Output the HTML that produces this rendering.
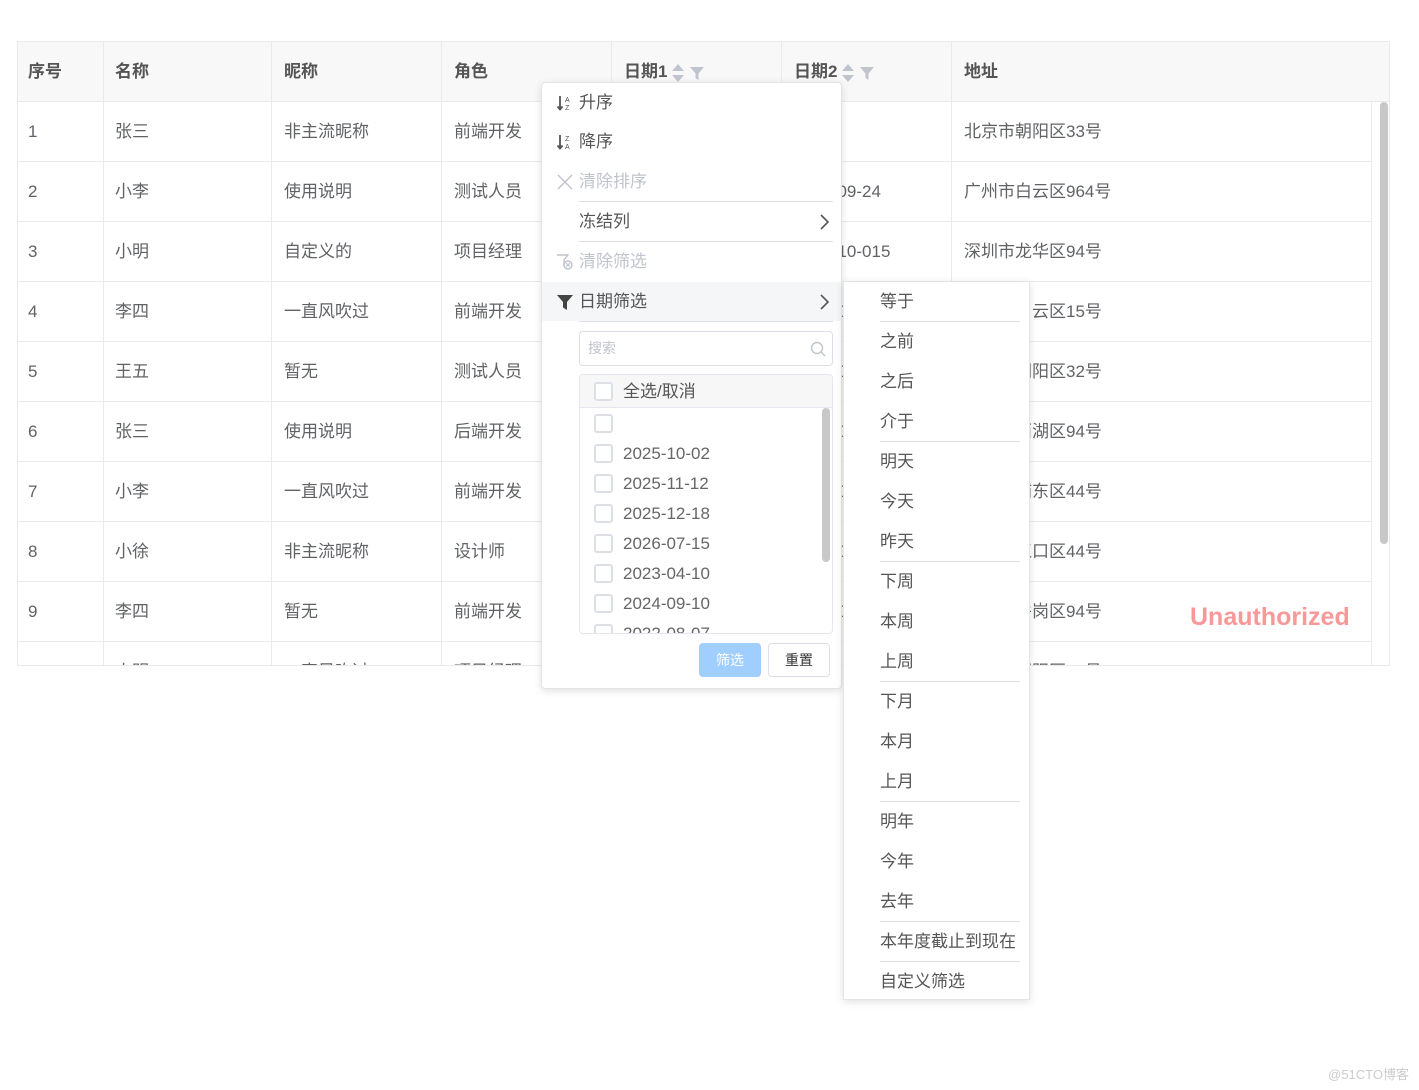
<!DOCTYPE html>
<html><head><meta charset="utf-8"><style>
*{box-sizing:border-box;margin:0;padding:0}
body{width:1419px;height:1090px;background:#fff;font-family:"Liberation Sans","Noto Sans CJK SC",sans-serif;color:#606266;position:relative;overflow:hidden;font-size:17px}
.tbl{position:absolute;left:17px;top:41px;width:1373px;height:625px;border:1px solid #e8eaec;overflow:hidden}
.row{position:absolute;left:0;width:1353px;height:60px;border-bottom:1px solid #e8eaec}
.hd{background:#f8f8f9;color:#555;font-weight:bold}
.c{position:absolute;top:0;height:60px;line-height:60px;border-right:1px solid #e8eaec;padding-left:10px;white-space:nowrap;overflow:hidden}
.sb{position:absolute;left:1353px;top:0;width:19px;height:625px;border-left:1px solid #e8eaec;background:#fff}
.sbh{position:absolute;left:1353px;top:0;width:19px;height:60px;background:#f8f8f9;border-bottom:1px solid #e8eaec}
.thumb{position:absolute;left:1362px;top:60px;width:8px;height:442px;background:#c8c8c8;border-radius:4px}
.menu{position:absolute;left:541px;top:82px;width:301px;height:607px;background:#fff;border:1px solid #e4e4e4;border-radius:4px;box-shadow:0 2px 8px rgba(0,0,0,.12)}
.mi{position:absolute;left:0;width:299px;height:40px;line-height:40px;padding-left:37px;color:#555}
.dis{color:#c0c4cc}
.sep{position:absolute;height:1px;background:#dcdfe6}
.ic{position:absolute;left:14px;top:11px;width:18px;height:18px}
.arr{position:absolute;right:12px;top:12px}
.sub{position:absolute;left:843px;top:281px;width:187px;height:719px;background:#fff;border:1px solid #e4e4e4;box-shadow:0 2px 8px rgba(0,0,0,.12)}
.si{position:absolute;left:36px;height:40px;line-height:40px;color:#555}
.cb{position:absolute;left:14px;width:19px;height:19px;border:2px solid #dcdfe6;border-radius:3px;background:#fff}
.li{position:absolute;left:0;width:252px;height:30px}
.li span{position:absolute;left:43px;top:0;line-height:30px;color:#666}
.hi{display:inline-block;vertical-align:middle;margin-left:4px}
</style></head><body>
<div class="tbl">
 <div class="row hd" style="top:0;height:60px">
  <div class="c" style="left:0;width:86px">序号</div>
  <div class="c" style="left:86px;width:168px;padding-left:11px">名称</div>
  <div class="c" style="left:254px;width:170px;padding-left:12px">昵称</div>
  <div class="c" style="left:424px;width:170px;padding-left:12px">角色</div>
  <div class="c" style="left:594px;width:170px;padding-left:12px">日期1<svg class="hi" width="14" height="20" viewBox="0 0 14 20"><path d="M7 1L13 8H1Z M7 19L13 12H1Z" fill="#c0c4cc"/></svg><svg class="hi" width="16" height="16" viewBox="0 0 16 16"><path d="M1 2H15L9.5 8.5V15L6.5 13V8.5Z" fill="#c0c4cc"/></svg></div>
  <div class="c" style="left:764px;width:170px;padding-left:12px">日期2<svg class="hi" width="14" height="20" viewBox="0 0 14 20"><path d="M7 1L13 8H1Z M7 19L13 12H1Z" fill="#c0c4cc"/></svg><svg class="hi" width="16" height="16" viewBox="0 0 16 16"><path d="M1 2H15L9.5 8.5V15L6.5 13V8.5Z" fill="#c0c4cc"/></svg></div>
  <div class="c" style="left:934px;width:419px;padding-left:12px;border-right:none">地址</div>
 </div>
 <div class="sbh"></div>
 <div class="sb" style="top:60px"></div>
 <div class="thumb"></div>
</div>
<script>
var d=[["1","张三","非主流昵称","前端开发","2025-10-02","","北京市朝阳区33号"],
["2","小李","使用说明","测试人员","2025-11-12","2024-09-24","广州市白云区964号"],
["3","小明","自定义的","项目经理","2025-12-18","2023-10-015","深圳市龙华区94号"],
["4","李四","一直风吹过","前端开发","2026-07-15","2024-09-24","广州市白云区15号"],
["5","王五","暂无","测试人员","2023-04-10","2024-09-24","北京市朝阳区32号"],
["6","张三","使用说明","后端开发","2024-09-10","2024-09-24","杭州市西湖区94号"],
["7","小李","一直风吹过","前端开发","2022-08-07","2024-09-24","上海市浦东区44号"],
["8","小徐","非主流昵称","设计师","2022-08-07","2024-09-24","武汉市江口区44号"],
["9","李四","暂无","前端开发","2022-08-07","2024-09-24","长沙市岳岗区94号"],
["10","小明","一直风吹过","项目经理","2022-08-07","2024-09-24","北京市朝阳区33号"]];
var L=[0,86,254,424,594,764,934],W=[86,168,170,170,170,170,419],P=[10,11,12,12,12,12,12];
var t=document.querySelector('.tbl'),h='';
d.forEach(function(r,i){h+='<div class="row" style="top:'+(60+i*60)+'px">';
r.forEach(function(v,j){h+='<div class="c" style="left:'+L[j]+'px;width:'+W[j]+'px;padding-left:'+P[j]+'px'+(j==6?';border-right:none':'')+'">'+v+'</div>'});h+='</div>'});
t.insertAdjacentHTML('afterbegin',h);
</script>
<div style="position:absolute;left:1190px;top:603px;font-size:25px;font-weight:bold;color:#f89898">Unauthorized</div>
<div class="menu">
 <div class="mi" style="top:0"><svg class="ic" viewBox="0 0 18 18"><path d="M4 2V15M1.5 12.5L4 15.5L6.5 12.5" stroke="#555" stroke-width="1.8" fill="none"/><text x="9" y="8" font-size="7" fill="#555" font-family="Liberation Sans">A</text><text x="9" y="16" font-size="7" fill="#555" font-family="Liberation Sans">Z</text></svg>升序</div>
 <div class="mi" style="top:39px"><svg class="ic" viewBox="0 0 18 18"><path d="M4 2V15M1.5 12.5L4 15.5L6.5 12.5" stroke="#555" stroke-width="1.8" fill="none"/><text x="9" y="8" font-size="7" fill="#555" font-family="Liberation Sans">Z</text><text x="9" y="16" font-size="7" fill="#555" font-family="Liberation Sans">A</text></svg>降序</div>
 <div class="mi dis" style="top:79px"><svg class="ic" viewBox="0 0 18 18"><path d="M2 2L16 16M16 2L2 16" stroke="#c0c4cc" stroke-width="1.5"/></svg>清除排序</div>
 <div class="sep" style="left:37px;top:118px;width:254px"></div>
 <div class="mi" style="top:119px">冻结列<svg class="arr" width="10" height="16" viewBox="0 0 10 16"><path d="M2 1L9 8L2 15" stroke="#555" stroke-width="1.6" fill="none"/></svg></div>
 <div class="sep" style="left:37px;top:158px;width:254px"></div>
 <div class="mi dis" style="top:159px"><svg class="ic" viewBox="0 0 18 18"><path d="M1 2H12L8 7V13" stroke="#c0c4cc" stroke-width="1.4" fill="none"/><circle cx="12" cy="12" r="4" stroke="#c0c4cc" stroke-width="1.4" fill="none"/><path d="M10 10L14 14M14 10L10 14" stroke="#c0c4cc" stroke-width="1.2"/></svg>清除筛选</div>
 <div class="mi" style="top:199px;background:#f5f6f8;height:39px"><svg class="ic" viewBox="0 0 18 18"><path d="M1 2H17L11 9V17L7 14.5V9Z" fill="#444"/></svg>日期筛选<svg class="arr" width="10" height="16" viewBox="0 0 10 16"><path d="M2 1L9 8L2 15" stroke="#555" stroke-width="1.6" fill="none"/></svg></div>
 <div class="sep" style="left:37px;top:238px;width:254px"></div>
 <div style="position:absolute;left:37px;top:248px;width:254px;height:35px;border:1px solid #dcdfe6;border-radius:4px;font-size:14px;color:#c0c4cc;line-height:33px;padding-left:8px">搜索<svg style="position:absolute;right:6px;top:9px" width="16" height="16" viewBox="0 0 16 16"><circle cx="7" cy="7" r="5.5" stroke="#c0c4cc" stroke-width="1.4" fill="none"/><path d="M11 11L15 15" stroke="#c0c4cc" stroke-width="1.4"/></svg></div>
 <div style="position:absolute;left:37px;top:291px;width:254px;height:260px;border:1px solid #e4e7ed;border-radius:4px;overflow:hidden">
  <div style="position:absolute;left:0;top:0;width:252px;height:33px;background:#f7f7f7;border-bottom:1px solid #e4e7ed"><div class="cb" style="top:7px"></div><span style="position:absolute;left:43px;line-height:33px;color:#555">全选/取消</span></div>
  <div class="li" style="top:34px"><div class="cb" style="top:5px"></div></div>
  <div class="li" style="top:64px"><div class="cb" style="top:5px"></div><span>2025-10-02</span></div>
  <div class="li" style="top:94px"><div class="cb" style="top:5px"></div><span>2025-11-12</span></div>
  <div class="li" style="top:124px"><div class="cb" style="top:5px"></div><span>2025-12-18</span></div>
  <div class="li" style="top:154px"><div class="cb" style="top:5px"></div><span>2026-07-15</span></div>
  <div class="li" style="top:184px"><div class="cb" style="top:5px"></div><span>2023-04-10</span></div>
  <div class="li" style="top:214px"><div class="cb" style="top:5px"></div><span>2024-09-10</span></div>
  <div class="li" style="top:244px"><div class="cb" style="top:5px"></div><span>2022-08-07</span></div>
  <div style="position:absolute;left:242px;top:33px;width:8px;height:154px;background:#c8c8c8;border-radius:4px"></div>
 </div>
 <div style="position:absolute;left:157px;top:560px;width:62px;height:34px;background:#a0cfff;border-radius:4px;color:#fff;font-size:14px;text-align:center;line-height:34px">筛选</div>
 <div style="position:absolute;left:226px;top:560px;width:62px;height:34px;border:1px solid #dcdfe6;border-radius:4px;color:#333;font-size:14px;text-align:center;line-height:32px">重置</div>
</div>
<div class="sub" id="sub"></div>
<script>
var s=["等于","之前","之后","介于","明天","今天","昨天","下周","本周","上周","下月","本月","上月","明年","今年","去年","本年度截止到现在","自定义筛选"],sp=[0,3,6,9,12,15,16],o='';
s.forEach(function(v,i){o+='<div class="si" style="top:'+i*40+'px">'+v+'</div>';if(sp.indexOf(i)>=0)o+='<div class="sep" style="left:36px;width:140px;top:'+(i*40+39)+'px"></div>'});
document.getElementById('sub').innerHTML=o;
</script>
<div style="position:absolute;right:10px;top:1064px;font-size:13px;color:#ccc">@51CTO博客</div>
</body></html>
